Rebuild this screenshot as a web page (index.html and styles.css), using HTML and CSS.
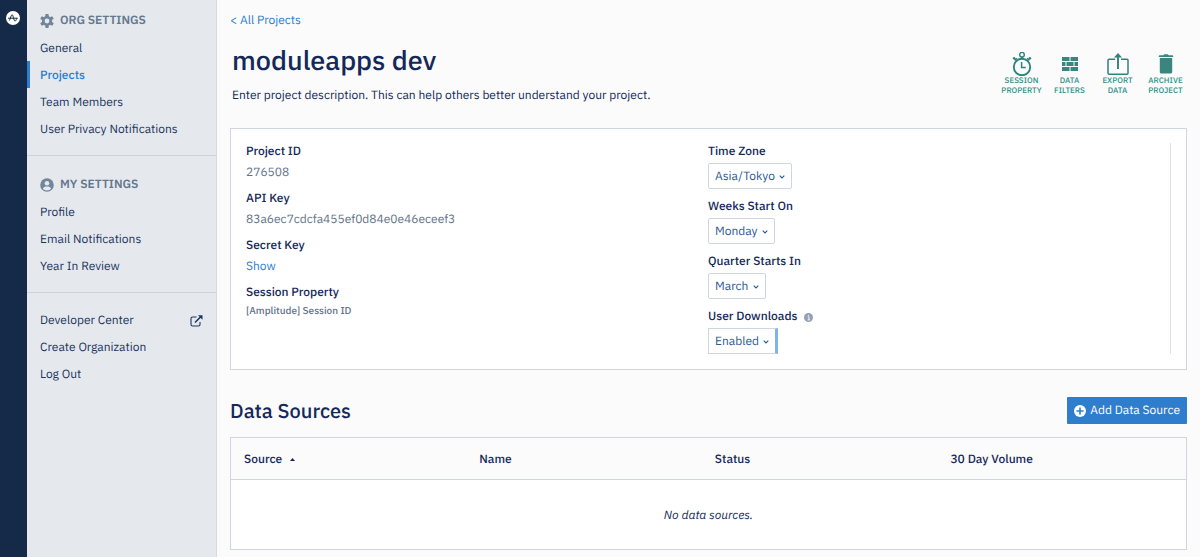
FILE: index.html
```html
<!DOCTYPE html>
<html lang="en">
<head>
<meta charset="utf-8">
<meta name="viewport" content="width=device-width, initial-scale=1">
<title>moduleapps dev</title>
<link rel="stylesheet" href="styles.css">
</head>
<body>
<div class="app">
  <div class="rail">
    <a class="logo" href="#" aria-label="Home">
      <svg width="14" height="14" viewBox="0 0 14 14"><circle cx="7" cy="7" r="7" fill="#fff"/><path d="M2.400 7.200h9M3.600 9.200C4.600 8 5 3.600 6.100 3.600S7.600 10 9 10c.9 0 1.300-1.300 1.600-2.400" fill="none" stroke="#152a49" stroke-width="1" stroke-linecap="round"/></svg>
    </a>
  </div>
  <nav class="sidebar">
    <section class="group">
      <h2 class="group-title">
        <svg width="14" height="14" viewBox="0 0 14 14"><g fill="#738599"><rect x="5.300" width="3.400" height="14" rx=".8"/><rect x="5.300" width="3.400" height="14" rx=".8" transform="rotate(60 7 7)"/><rect x="5.300" width="3.400" height="14" rx=".8" transform="rotate(120 7 7)"/><circle cx="7" cy="7" r="5.100"/></g><circle cx="7" cy="7" r="2.400" fill="#e5e9ee"/></svg>
        ORG SETTINGS
      </h2>
      <a class="item" href="#">General</a>
      <a class="item active" href="#" aria-current="page">Projects</a>
      <a class="item" href="#">Team Members</a>
      <a class="item" href="#">User Privacy Notifications</a>
    </section>
    <section class="group">
      <h2 class="group-title">
        <svg width="14" height="14" viewBox="0 0 14 14"><circle cx="7" cy="7" r="6.800" fill="#738599"/><circle cx="7" cy="5.200" r="2.300" fill="#e5e9ee"/><path d="M2.900 10.800C3.300 9 5 8.400 7 8.400s3.700.6 4.100 2.400C10 12 8.600 12.500 7 12.500S4 12 2.900 10.800z" fill="#e5e9ee"/></svg>
        MY SETTINGS
      </h2>
      <a class="item" href="#">Profile</a>
      <a class="item" href="#">Email Notifications</a>
      <a class="item" href="#">Year In Review</a>
    </section>
    <section class="group">
      <a class="item" href="#">Developer Center
        <svg width="13" height="12" viewBox="0 0 13 12" fill="none" stroke="#1d3560"><path d="M6.500 2H2.500Q1 2 1 3.500v6Q1 11 2.500 11h6q1.500 0 1.500-1.500V7" stroke-width="1.100"/><path d="M5 7.500l6-6" stroke-width="1.600"/><path d="M8 .3h4.500v4.500z" fill="#1d3560" stroke="none"/></svg>
      </a>
      <a class="item" href="#">Create Organization</a>
      <a class="item" href="#">Log Out</a>
    </section>
  </nav>
  <main class="main">
    <a class="link back" href="#">&lt; All Projects</a>
    <header class="head">
      <div class="intro">
        <h1 class="title">moduleapps dev</h1>
        <p class="desc">Enter project description. This can help others better understand your project.</p>
      </div>
      <div class="actions">
        <button class="action" type="button">
          <svg width="20" height="24" viewBox="0 1 20 24" fill="none" stroke="#2e837c"><circle cx="10" cy="16" r="8.200" stroke-width="1.900"/><circle cx="10" cy="3.700" r="2.300" stroke-width="1.400"/><path d="M10 6v2M3 6.500l-1.700 1.700M17 6.500l1.700 1.700" stroke-width="2.400"/><path d="M2.600 9.400L5 7.200M17.400 9.400L15 7.200M9.600 11v5.600h4.200" stroke-width="1.500"/></svg>
          <span>SESSION<br>PROPERTY</span>
        </button>
        <button class="action" type="button">
          <svg width="16" height="24" viewBox="0 1 16 24" fill="#3b857f"><path d="M0 6h7.500v4H0zM8.500 6H16v4H8.500zM0 11h3.500v4H0zM4.500 11h7v4h-7zM12.500 11H16v4h-3.500zM0 16h7.500v4H0zM8.500 16H16v4H8.500z"/></svg>
          <span>DATA<br>FILTERS</span>
        </button>
        <button class="action" type="button">
          <svg width="22" height="24" viewBox="0 1 22 24" fill="none" stroke="#2e837c"><path d="M8 8.200H2q-1 0-1 1V22q0 1.200 1 1.200h18q1 0 1-1.200V9.200q0-1-1-1h-6" stroke-width="1.500"/><path d="M11 18V4" stroke-width="1.900"/><path d="M7 6.500l4-4.500 4 4.500z" fill="#2e837c" stroke="none"/></svg>
          <span>EXPORT<br>DATA</span>
        </button>
        <button class="action" type="button">
          <svg width="16" height="24" viewBox="0 1 16 24" fill="#3b857f"><path d="M.8 5.200q0-1 1-1h3.600q.3-1 1.200-1h2.800q.9 0 1.200 1h3.600q1 0 1 1v.8H.8zM1.800 7h12.400v14q0 1.500-1.500 1.500H3.300q-1.500 0-1.500-1.500z"/></svg>
          <span>ARCHIVE<br>PROJECT</span>
        </button>
      </div>
    </header>

    <section class="panel">
      <dl class="col fields">
        <div class="field"><dt class="label">Project ID</dt><dd class="value">276508</dd></div>
        <div class="field"><dt class="label">API Key</dt><dd class="value">83a6ec7cdcfa455ef0d84e0e46eceef3</dd></div>
        <div class="field"><dt class="label">Secret Key</dt><dd class="value"><a class="link" href="#">Show</a></dd></div>
        <div class="field"><dt class="label">Session Property</dt><dd class="value small">[Amplitude] Session ID</dd></div>
      </dl>
      <div class="col choices">
        <div class="choice">
          <label class="label" for="tz">Time Zone</label>
          <div class="pick"><select id="tz"><option>Asia/Tokyo</option></select><svg class="chev" width="6" height="4" viewBox="0 0 6 4"><path d="M.7.700L3 3 5.300.7" fill="none" stroke="#2b5a92" stroke-width="1.100"/></svg></div>
        </div>
        <div class="choice">
          <label class="label" for="week">Weeks Start On</label>
          <div class="pick"><select id="week"><option>Monday</option></select><svg class="chev" width="6" height="4" viewBox="0 0 6 4"><path d="M.7.700L3 3 5.300.7" fill="none" stroke="#2b5a92" stroke-width="1.100"/></svg></div>
        </div>
        <div class="choice">
          <label class="label" for="quarter">Quarter Starts In</label>
          <div class="pick"><select id="quarter"><option>March</option></select><svg class="chev" width="6" height="4" viewBox="0 0 6 4"><path d="M.7.700L3 3 5.300.7" fill="none" stroke="#2b5a92" stroke-width="1.100"/></svg></div>
        </div>
        <div class="choice">
          <label class="label" for="dl">User Downloads
            <svg width="9" height="9" viewBox="0 0 9 9"><circle cx="4.500" cy="4.500" r="4.500" fill="#93a1b3"/><path d="M3.700 3.900h1.300V7M3.600 6.900h2.200M4 2.300h1" fill="none" stroke="#fff" stroke-width=".9"/></svg>
          </label>
          <div class="pick marked"><select id="dl"><option>Enabled</option></select><svg class="chev" width="6" height="4" viewBox="0 0 6 4"><path d="M.7.700L3 3 5.300.7" fill="none" stroke="#2b5a92" stroke-width="1.100"/></svg></div>
        </div>
      </div>
    </section>

    <div class="bar">
      <h2 class="subtitle">Data Sources</h2>
      <button class="add" type="button">
        <svg width="12" height="12" viewBox="0 0 12 12"><circle cx="6" cy="6" r="6" fill="#fff"/><path d="M6 2.500v7M2.500 6h7" stroke="#2f7dcd" stroke-width="1.600"/></svg>
        Add Data Source
      </button>
    </div>
    <table class="table">
      <thead>
        <tr>
          <th scope="col" aria-sort="ascending">Source <svg class="sort" width="5" height="3" viewBox="0 0 5 3"><path d="M0 3l2.500-3L5 3z" fill="#14295a"/></svg></th>
          <th scope="col">Name</th>
          <th scope="col">Status</th>
          <th scope="col">30 Day Volume</th>
        </tr>
      </thead>
      <tbody>
        <tr><td colspan="4">No data sources.</td></tr>
      </tbody>
    </table>
  </main>
</div>
</body>
</html>
```
FILE: styles.css
```css
* {
  box-sizing: border-box;
}

body {
  margin: 0;
  background: #fbfbfb;
  color: #14295a;
  font: 12px/18px "IBM Plex Sans", Roboto, sans-serif;
  text-rendering: geometricPrecision;
}

h1, h2, p, dl, dd {
  margin: 0;
}

a {
  color: inherit;
  text-decoration: none;
}

svg {
  display: block;
  flex: none;
}

button, select {
  font: inherit;
  margin: 0;
  cursor: pointer;
  text-rendering: inherit;
}

.app {
  display: flex;
  min-height: 100vh;
}

.rail {
  flex: none;
  width: 27px;
  padding: 11px 6px;
  background: #152a49;
}

.sidebar {
  flex: none;
  width: 190px;
  background: #e5e9ee;
  border-right: 1px solid #d5dce4;
}

.group {
  padding: 13px 0;
}

.group:first-child {
  padding-top: 5px;
}

.group + .group {
  border-top: 1px solid #cbd3dd;
}

.group-title {
  display: flex;
  align-items: center;
  gap: 6px;
  padding: 7px 13px 4px;
  color: #64788f;
  font-size: 12px;
  font-weight: 600;
}

.item {
  display: flex;
  align-items: center;
  justify-content: space-between;
  padding: 6px 13px 3px;
  color: #1d3560;
}

.item.active {
  padding-left: 10px;
  border-left: 3px solid #2f7dcd;
  color: #2f7dcd;
  font-weight: 500;
}

.main {
  flex: 1;
  min-width: 0;
  padding: 12px 13px 7px;
}

.link {
  color: #2f7dcd;
}

.back {
  display: inline-block;
}

.head {
  display: flex;
  justify-content: space-between;
  align-items: flex-start;
  padding: 11px 0 23px 2px;
}

.title {
  font-size: 27px;
  line-height: 40px;
  font-weight: 500;
}

.desc {
  padding-top: 6px;
}

.actions {
  display: grid;
  grid-template-columns: repeat(4, 43px);
  gap: 5px;
  padding-top: 11px;
}

.action {
  display: flex;
  flex-direction: column;
  align-items: center;
  padding: 0;
  border: 0;
  background: none;
  color: #2e8f86;
  font-size: 8px;
  line-height: 10px;
  font-weight: 500;
}

.panel {
  display: flex;
  padding: 14px 15px 15px;
  border: 1px solid #cfd6e0;
  background: #fff;
}

.col {
  flex: 1;
}

.fields {
  display: grid;
  align-content: start;
  gap: 8px;
}

.field {
  display: grid;
  gap: 3px;
}

.label {
  display: flex;
  align-items: center;
  gap: 7px;
  font-weight: 500;
}

.value {
  color: #5f7389;
}

.value.small {
  font-size: 10px;
  line-height: 12px;
  font-weight: 500;
}

.choices {
  display: grid;
  gap: 9px;
  border-right: 1px solid #dfe3e9;
}

.choice {
  display: grid;
  justify-items: start;
  gap: 2px;
}

.pick {
  position: relative;
  border: 1px solid #cfd6e0;
  border-radius: 2px;
}

.pick.marked {
  border-right: 3px solid #7fb5e3;
  border-radius: 0;
}

.pick select {
  display: block;
  height: 24px;
  padding: 2px 16px 0 6px;
  border: 0;
  background: none;
  color: #2b5a92;
  appearance: none;
}

.chev {
  position: absolute;
  right: 6px;
  top: 11px;
  pointer-events: none;
}

.bar {
  display: flex;
  justify-content: space-between;
  align-items: center;
  padding: 27px 0 13px;
}

.subtitle {
  font-size: 20px;
  line-height: 26px;
  font-weight: 500;
}

.add {
  display: flex;
  align-items: center;
  gap: 4px;
  height: 27px;
  padding: 0 7px;
  border: 0;
  border-radius: 1px;
  background: #2f7dcd;
  color: #fff;
}

.table {
  width: 100%;
  table-layout: fixed;
  border: 1px solid #cfd6e0;
  border-spacing: 0;
}

.table th {
  height: 42px;
  padding: 2px 0 0;
  border-bottom: 1px solid #cfd6e0;
  text-align: left;
  font-weight: 500;
}

.table th:first-child {
  width: 26%;
  padding-left: 13px;
}

.sort {
  display: inline-block;
  margin-left: 5px;
  vertical-align: middle;
}

.table td {
  height: 69px;
  padding: 2px 0 0;
  background: #fff;
  text-align: center;
  font-style: italic;
}
```
